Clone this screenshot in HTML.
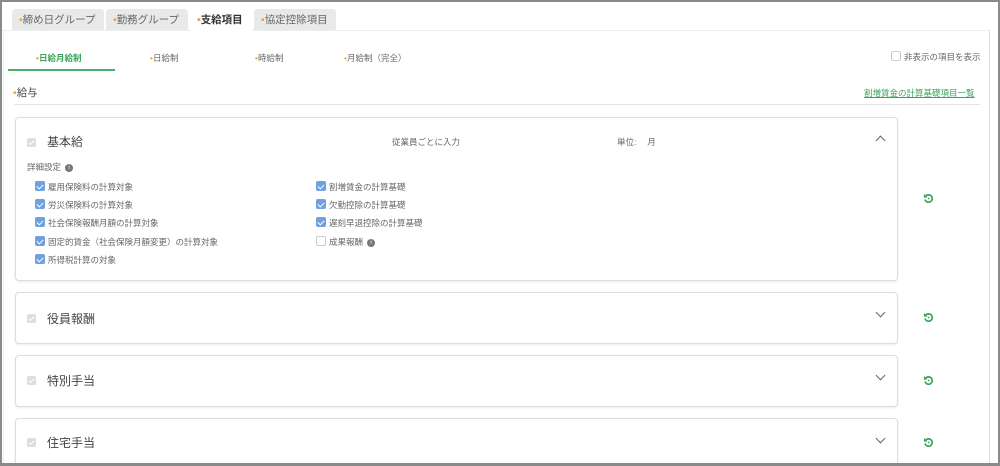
<!DOCTYPE html>
<html><head><meta charset="utf-8"><style>
*{box-sizing:border-box;margin:0;padding:0}
html,body{width:1000px;height:466px;overflow:hidden}
body{background:#fff;font-family:"Liberation Sans","Noto Sans CJK JP",sans-serif;color:#555;position:relative}
.frame{position:absolute;left:0;top:0;width:1000px;height:466px;border:2px solid #8a8a8a;border-bottom-width:3px;z-index:5}
.a{position:absolute;white-space:nowrap}
.tab{position:absolute;top:9px;height:22px;background:#e8e9eb;border-radius:3px 3px 0 0;font-size:10.5px;line-height:22px;padding-left:7px;color:#666}
.dot{color:#f0a030}
.panel{position:absolute;left:3px;top:30px;width:987px;height:440px;border:1px solid #eee;border-right-color:#ddd;background:#fff}
.card{position:absolute;left:15px;width:883px;border:1px solid #ddd;border-radius:4px;background:#fff;box-shadow:0 1px 2px rgba(0,0,0,.08)}
.gcb{position:absolute;width:9px;height:9px;background:#ddd;border-radius:2px}
.gcb:after{content:"";position:absolute;left:3px;top:1px;width:2px;height:5px;border:solid #fff;border-width:0 1px 1px 0;transform:rotate(45deg)}
.cb{position:absolute;width:10px;height:10px;background:#6fa1e0;border-radius:2px}
.cb:after{content:"";position:absolute;left:3px;top:1.5px;width:3px;height:5px;border:solid #fff;border-width:0 1.3px 1.3px 0;transform:rotate(45deg)}
.ecb{position:absolute;width:10px;height:10px;border:1px solid #ccc;border-radius:2px;background:#fff}
.s{font-size:8.5px;color:#666}
.t{font-size:12px;color:#444}
.chev{position:absolute;width:7px;height:7px;border:solid #666;border-width:1.5px 1.5px 0 0}
.ref{position:absolute}
.info{display:inline-block;width:8px;height:8px;border-radius:50%;background:#777;color:#fff;font-size:6px;line-height:8px;text-align:center;vertical-align:middle;margin-left:4px}
</style></head><body>
<div class="tab" style="left:12px;width:92px"><span class="dot">•</span>締め日グループ</div>
<div class="tab" style="left:106px;width:82px"><span class="dot">•</span>勤務グループ</div>
<div class="tab" style="left:190px;width:62px;background:#fff;color:#333;font-weight:bold;z-index:2;height:23px"><span class="dot">•</span>支給項目</div>
<div class="tab" style="left:254px;width:82px"><span class="dot">•</span>協定控除項目</div>
<div class="panel"></div>

<div class="a s" style="left:36px;top:52px;color:#3aa35a;font-weight:bold"><span class="dot">•</span>日給月給制</div>
<div class="a" style="left:8px;top:69px;width:107px;height:2px;background:#4caf6a"></div>
<div class="a s" style="left:150px;top:52px"><span class="dot">•</span>日給制</div>
<div class="a s" style="left:255px;top:52px"><span class="dot">•</span>時給制</div>
<div class="a s" style="left:344px;top:52px"><span class="dot">•</span>月給制（完全）</div>
<div class="ecb" style="left:891px;top:51px"></div>
<div class="a s" style="left:904px;top:51px">非表示の項目を表示</div>

<div class="a" style="left:13px;top:85px;font-size:10.5px;color:#444"><span class="dot">•</span>給与</div>
<div class="a s" style="left:864px;top:87px;color:#3aa35a;text-decoration:underline">割増賃金の計算基礎項目一覧</div>
<div class="a" style="left:14px;top:104px;width:966px;height:1px;background:#e5e5e5"></div>

<div class="card" style="top:117px;height:164px"></div>
<div class="gcb" style="left:27px;top:138px"></div>
<div class="a t" style="left:47px;top:133px">基本給</div>
<div class="a s" style="left:392px;top:136px">従業員ごとに入力</div>
<div class="a s" style="left:617px;top:136px">単位:　 月</div>
<div class="chev" style="left:877px;top:137px;transform:rotate(-45deg)"></div>
<div class="a s" style="left:27px;top:161px">詳細設定<span class="info">i</span></div>
<div class="cb" style="left:35px;top:181px"></div><div class="a s" style="left:48px;top:181px">雇用保険料の計算対象</div>
<div class="cb" style="left:35px;top:199px"></div><div class="a s" style="left:48px;top:199px">労災保険料の計算対象</div>
<div class="cb" style="left:35px;top:217px"></div><div class="a s" style="left:48px;top:217px">社会保険報酬月額の計算対象</div>
<div class="cb" style="left:35px;top:236px"></div><div class="a s" style="left:48px;top:236px">固定的賃金（社会保険月額変更）の計算対象</div>
<div class="cb" style="left:35px;top:254px"></div><div class="a s" style="left:48px;top:254px">所得税計算の対象</div>
<div class="cb" style="left:316px;top:181px"></div><div class="a s" style="left:329px;top:181px">割増賃金の計算基礎</div>
<div class="cb" style="left:316px;top:199px"></div><div class="a s" style="left:329px;top:199px">欠勤控除の計算基礎</div>
<div class="cb" style="left:316px;top:217px"></div><div class="a s" style="left:329px;top:217px">遅刻早退控除の計算基礎</div>
<div class="ecb" style="left:316px;top:236px"></div><div class="a s" style="left:329px;top:236px">成果報酬<span class="info">i</span></div>

<div class="card" style="top:292px;height:52px"></div>
<div class="gcb" style="left:27px;top:314px"></div>
<div class="a t" style="left:47px;top:310px">役員報酬</div>
<div class="chev" style="left:877px;top:309px;transform:rotate(135deg)"></div>

<div class="card" style="top:355px;height:52px"></div>
<div class="gcb" style="left:27px;top:376px"></div>
<div class="a t" style="left:47px;top:372px">特別手当</div>
<div class="chev" style="left:877px;top:372px;transform:rotate(135deg)"></div>

<div class="card" style="top:418px;height:60px"></div>
<div class="gcb" style="left:27px;top:438px"></div>
<div class="a t" style="left:47px;top:434px">住宅手当</div>
<div class="chev" style="left:877px;top:435px;transform:rotate(135deg)"></div>

<svg class="ref" style="left:923px;top:193px" width="11" height="11" viewBox="0 0 12 12"><path d="M3 3.5A4 4 0 1 1 2.2 7" fill="none" stroke="#3aa35a" stroke-width="1.8"/><path d="M1 1v4h4z" fill="#3aa35a"/><circle cx="6.2" cy="6" r="1" fill="#3aa35a"/></svg>
<svg class="ref" style="left:923px;top:312px" width="11" height="11" viewBox="0 0 12 12"><path d="M3 3.5A4 4 0 1 1 2.2 7" fill="none" stroke="#3aa35a" stroke-width="1.8"/><path d="M1 1v4h4z" fill="#3aa35a"/><circle cx="6.2" cy="6" r="1" fill="#3aa35a"/></svg>
<svg class="ref" style="left:923px;top:375px" width="11" height="11" viewBox="0 0 12 12"><path d="M3 3.5A4 4 0 1 1 2.2 7" fill="none" stroke="#3aa35a" stroke-width="1.8"/><path d="M1 1v4h4z" fill="#3aa35a"/><circle cx="6.2" cy="6" r="1" fill="#3aa35a"/></svg>
<svg class="ref" style="left:923px;top:437px" width="11" height="11" viewBox="0 0 12 12"><path d="M3 3.5A4 4 0 1 1 2.2 7" fill="none" stroke="#3aa35a" stroke-width="1.8"/><path d="M1 1v4h4z" fill="#3aa35a"/><circle cx="6.2" cy="6" r="1" fill="#3aa35a"/></svg>
<div class="frame"></div>
</body></html>
